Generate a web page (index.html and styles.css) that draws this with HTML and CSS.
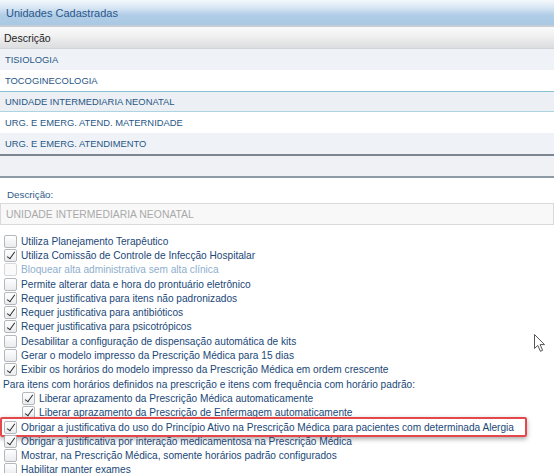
FILE: index.html
```html
<html>
  <head>
    <title>Unidades Cadastradas</title>
    <link rel="stylesheet" href="styles.css">
  </head>
  <body>
    <div class="grid">
      <div class="grid-title">Unidades Cadastradas</div>
      <div class="grid-head">Descrição</div>
      <ul class="grid-rows">
        <li class="alt">TISIOLOGIA</li>
        <li>TOCOGINECOLOGIA</li>
        <li class="selected">UNIDADE INTERMEDIARIA NEONATAL</li>
        <li>URG. E EMERG. ATEND. MATERNIDADE</li>
        <li class="alt">URG. E EMERG. ATENDIMENTO</li>
      </ul>
      <div class="grid-pager"></div>
    </div>

    <div class="form">
      <label class="field-label">Descrição:</label>
      <input class="field-input" type="text" value="UNIDADE INTERMEDIARIA NEONATAL" readonly>

      <ul class="options">
        <li class="opt"><span class="box"></span>Utiliza Planejamento Terapêutico</li>
        <li class="opt"><span class="box on"></span>Utiliza Comissão de Controle de Infecção Hospitalar</li>
        <li class="opt off"><span class="box"></span>Bloquear alta administrativa sem alta clínica</li>
        <li class="opt"><span class="box"></span>Permite alterar data e hora do prontuário eletrônico</li>
        <li class="opt"><span class="box on"></span>Requer justificativa para itens não padronizados</li>
        <li class="opt"><span class="box on"></span>Requer justificativa para antibióticos</li>
        <li class="opt"><span class="box on"></span>Requer justificativa para psicotrópicos</li>
        <li class="opt"><span class="box"></span>Desabilitar a configuração de dispensação automática de kits</li>
        <li class="opt"><span class="box"></span>Gerar o modelo impresso da Prescrição Médica para 15 dias</li>
        <li class="opt"><span class="box on"></span>Exibir os horários do modelo impresso da Prescrição Médica em ordem crescente</li>
        <li class="opt caption">Para itens com horários definidos na prescrição e itens com frequência com horário padrão:</li>
        <li class="opt sub"><span class="box on"></span>Liberar aprazamento da Prescrição Médica automaticamente</li>
        <li class="opt sub"><span class="box on"></span>Liberar aprazamento da Prescrição de Enfermagem automaticamente</li>
        <li class="opt marked"><span class="box on"></span>Obrigar a justificativa do uso do Princípio Ativo na Prescrição Médica para pacientes com determinada Alergia</li>
        <li class="opt"><span class="box on"></span>Obrigar a justificativa por interação medicamentosa na Prescrição Médica</li>
        <li class="opt"><span class="box"></span>Mostrar, na Prescrição Médica, somente horários padrão configurados</li>
        <li class="opt"><span class="box"></span>Habilitar manter exames</li>
      </ul>
    </div>

    <svg class="cursor" width="13" height="20" viewBox="0 0 13 20">
      <path d="M1.5 1.5 L1.5 15.5 L4.8 12.4 L7.4 18.3 L9.6 17.3 L7.1 11.6 L11.5 11.6 Z"
            fill="#fff" stroke="#555" stroke-width="1" stroke-linejoin="round"/>
    </svg>
  </body>
</html>
```

FILE: styles.css
```css
body {
  margin: 0;
  background: #fff;
  font-family: "Liberation Sans", Arial, sans-serif;
  font-size: 10px;
  overflow: hidden;
}
ul {
  list-style: none;
  margin: 0;
  padding: 0;
}

/* grid of registered units */
.grid-title {
  height: 25px;
  line-height: 26px;
  padding-left: 6px;
  font-size: 11px;
  color: #2a578a;
  background: linear-gradient(#f4f8fc 0%, #d3e3f2 35%, #b1cde7 60%, #a9c8e3 100%);
  border-bottom: 2px solid #c5ccd3;
}
.grid-head {
  height: 21px;
  line-height: 22px;
  padding-left: 4px;
  font-size: 10.5px;
  color: #1e1e1e;
  background: linear-gradient(#fafafa, #f1f1f1 40%, #dcdddf);
  border-bottom: 1px solid #d2d5d8;
}
.grid-rows li {
  height: 21px;
  line-height: 21px;
  padding-left: 5px;
  font-size: 9.4px;
  color: #285684;
  background: #fff;
  box-sizing: border-box;
}
.grid-rows li.alt {
  background: #eff3f8;
}
.grid-rows li.selected {
  background: #ecf0f4;
  border-top: 1px solid #86c0d2;
  border-bottom: 1px solid #acd5e1;
  line-height: 19px;
}
.grid-pager {
  height: 20px;
  background: #eff1f4;
  border-top: 2px solid #7c8691;
  border-bottom: 2px solid #8e9aa6;
}

/* edit form */
.form {
  padding-top: 9px;
}
.field-label {
  display: block;
  height: 15px;
  line-height: 15px;
  padding-left: 7px;
  font-size: 9.8px;
  color: #2f5b89;
}
.field-input {
  display: block;
  width: 100%;
  height: 22px;
  margin: 1px 0 9px;
  padding: 0 0 0 5px;
  box-sizing: border-box;
  border: 1px solid #dadada;
  background: #f8f8f8;
  font-family: "Liberation Sans", Arial, sans-serif;
  font-size: 10.4px;
  color: #a9a9a9;
  outline: none;
}

.opt {
  position: relative;
  display: flex;
  align-items: center;
  gap: 4px;
  height: 14.3px;
  padding-left: 4px;
  font-size: 10.15px;
  color: #1a4877;
  white-space: nowrap;
}
.opt.off {
  color: #8eaecd;
}
.opt.caption {
  padding-left: 3px;
}
.opt.sub {
  padding-left: 22px;
}
.box {
  position: relative;
  flex: none;
  width: 11px;
  height: 11px;
  border: 1px solid #b4b8bc;
  border-radius: 2px;
  background: linear-gradient(#ffffff, #e9ebed);
}
.off .box {
  border-color: #d6d9dc;
  background: #fafafa;
}
.box.on::after {
  content: "";
  position: absolute;
  left: 4px;
  top: 0px;
  width: 3px;
  height: 8px;
  border-right: 1.5px solid #2b2b2b;
  border-bottom: 1.5px solid #2b2b2b;
  transform: rotate(35deg);
}

/* red highlight drawn round one option */
.opt.marked::before {
  content: "";
  position: absolute;
  left: 0;
  top: -3px;
  width: 523px;
  height: 16px;
  border: 2px solid #e5484a;
  border-radius: 2px;
  box-shadow: 0 2px 5px rgba(0, 0, 0, 0.35);
}

.cursor {
  position: absolute;
  left: 533px;
  top: 333px;
}
```
